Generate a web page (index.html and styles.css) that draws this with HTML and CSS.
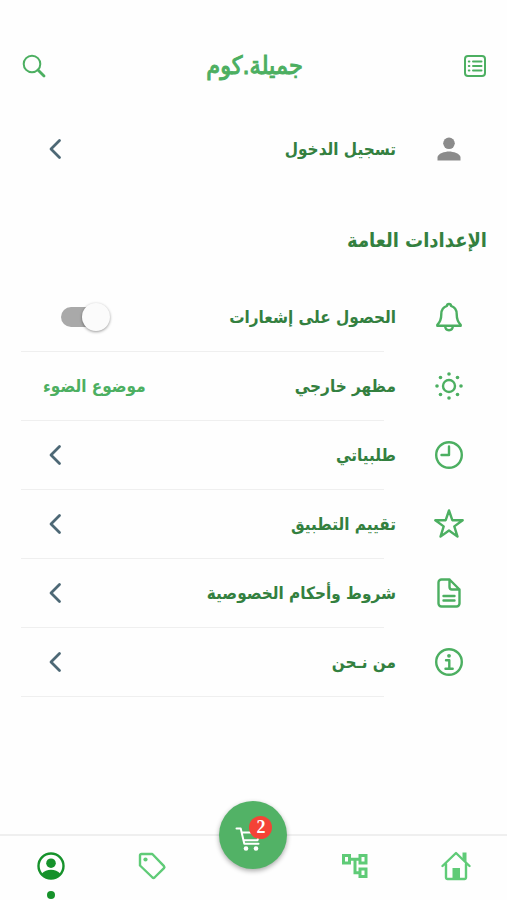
FILE: index.html
```html
<!DOCTYPE html>
<html lang="ar" dir="rtl">
<head>
<meta charset="utf-8">
<meta name="viewport" content="width=device-width, initial-scale=1">
<title>جميلة.كوم</title>
<link rel="stylesheet" href="styles.css">
</head>
<body>
<header class="topbar">
  <button class="icon-button" type="button" aria-label="القائمة">
    <svg class="icon-md" viewBox="0 0 24 24"><rect x="2" y="2" width="20" height="20" rx="3"/><path d="M10 7.500h8.500M10 12h8.500M10 16.500h8.500"/><path d="M5.800 7.500h.6M5.800 12h.6M5.800 16.500h.6"/></svg>
  </button>
  <h1 class="brand">جميلة.كوم</h1>
  <button class="icon-button" type="button" aria-label="بحث">
    <svg class="icon-md" viewBox="0 0 24 24"><circle cx="10" cy="10" r="8.300"/><path d="M16 16l6 6" stroke-width="2.800"/></svg>
  </button>
</header>

<main class="content">
  <a class="row login" href="#login">
    <span class="row-icon"><svg class="person" viewBox="0 0 24 24"><circle cx="12" cy="6.300" r="5.800"/><path d="M0.500 23.500v-3c0-4 7.500-6 11.500-6s11.500 2 11.500 6v3z"/></svg></span>
    <span class="row-label">تسجيل الدخول</span>
    <svg class="chevron" viewBox="0 0 14 22"><path d="M11.500 2.500L3 11l8.500 8.500"/></svg>
  </a>

  <h2 class="section-title">الإعدادات العامة</h2>

  <ul class="settings">
    <li>
      <label class="row" for="notify">
        <span class="row-icon"><svg class="icon-lg" viewBox="0 0 30 30"><path d="M15 2c-1.300 0-2 .8-2 1.800C9.300 5 7.300 8 7.300 12c0 5.500-1 8-4 10.800v1h23.400v-1c-3-2.800-4-5.300-4-10.800 0-4-2-7-5.700-8.200 0-1-.7-1.800-2-1.800zM11.200 24c0 2.500 1.600 4.200 3.800 4.200s3.800-1.700 3.800-4.200"/></svg></span>
        <span class="row-label">الحصول على إشعارات</span>
        <input class="switch" id="notify" type="checkbox" role="switch">
      </label>
    </li>
    <li>
      <a class="row" href="#theme">
        <span class="row-icon"><svg class="icon-lg" viewBox="0 0 30 30"><circle cx="15" cy="15" r="6"/><g class="solid"><circle cx="15" cy="3" r="1.800"/><circle cx="15" cy="27" r="1.800"/><circle cx="3" cy="15" r="1.800"/><circle cx="27" cy="15" r="1.800"/><circle cx="6.500" cy="6.500" r="1.800"/><circle cx="23.500" cy="6.500" r="1.800"/><circle cx="6.500" cy="23.500" r="1.800"/><circle cx="23.500" cy="23.500" r="1.800"/></g></svg></span>
        <span class="row-label">مظهر خارجي</span>
        <span class="row-value">موضوع الضوء</span>
      </a>
    </li>
    <li>
      <a class="row" href="#orders">
        <span class="row-icon"><svg class="icon-lg" viewBox="0 0 30 30"><circle cx="15" cy="15" r="12.800"/><path d="M15 6.500V15H7.500"/></svg></span>
        <span class="row-label">طلبياتي</span>
        <svg class="chevron" viewBox="0 0 14 22"><path d="M11.500 2.500L3 11l8.500 8.500"/></svg>
      </a>
    </li>
    <li>
      <a class="row" href="#rate">
        <span class="row-icon"><svg class="icon-lg" viewBox="0 0 30 30"><path d="M15 1.500l3.300 9.700h10.400l-8.400 6.200 3.200 10.200L15 21.500l-8.500 6.100 3.200-10.200-8.400-6.200h10.400z"/></svg></span>
        <span class="row-label">تقييم التطبيق</span>
        <svg class="chevron" viewBox="0 0 14 22"><path d="M11.500 2.500L3 11l8.500 8.500"/></svg>
      </a>
    </li>
    <li>
      <a class="row" href="#terms">
        <span class="row-icon"><svg class="icon-lg" viewBox="0 0 30 30"><path d="M7.500 1.500H15.500L25.500 11.500V25.500a3 3 0 0 1-3 3H7.500a3 3 0 0 1-3-3V4.500a3 3 0 0 1 3-3zM15.500 1.500V9a2.500 2.500 0 0 0 2.500 2.500h7.500M9.500 18h11M9.500 22.500h11"/></svg></span>
        <span class="row-label">شروط وأحكام الخصوصية</span>
        <svg class="chevron" viewBox="0 0 14 22"><path d="M11.500 2.500L3 11l8.500 8.500"/></svg>
      </a>
    </li>
    <li>
      <a class="row" href="#about">
        <span class="row-icon"><svg class="icon-lg" viewBox="0 0 30 30"><circle cx="15" cy="15" r="12.800"/><path d="M12 13.200h3.300v8.300M11.500 21.700h7.200"/><circle class="solid" cx="15" cy="8.800" r="1.900"/></svg></span>
        <span class="row-label">من نـحن</span>
        <svg class="chevron" viewBox="0 0 14 22"><path d="M11.500 2.500L3 11l8.500 8.500"/></svg>
      </a>
    </li>
  </ul>
</main>

<nav class="tabbar">
  <a class="tab" href="#home" aria-label="الرئيسية">
    <svg class="icon-lg" viewBox="0 0 30 30"><path d="M1.500 15L15 2l13.500 13M5 13v13.500a1.500 1.500 0 0 0 1.500 1.500h17a1.500 1.500 0 0 0 1.500-1.500V13"/><path class="solid" d="M11.500 17h7.500V28h-7.500zM21.500 1.500h4V11l-4-3.800z"/></svg>
  </a>
  <a class="tab" href="#categories" aria-label="الأقسام">
    <svg class="icon-lg square" viewBox="0 0 30 30"><path d="M3.500 4.500h6v7.500h-6zM20 4.500h6v7.500h-6zM20 18h6v7.500h-6zM10 8.300h10M15 8.300v13.400h5"/></svg>
  </a>
  <a class="tab" href="#cart" aria-label="السلة">
    <span class="cart">
      <svg class="icon-cart" viewBox="0 0 26 26"><path d="M1.500 2.500h4.200l3.600 15.200h14.200M7 6.500h17.500l-2 7.700H8.500"/><g class="solid"><circle cx="11" cy="22.500" r="2.300"/><circle cx="21" cy="22.500" r="2.300"/></g></svg>
      <span class="badge">2</span>
    </span>
  </a>
  <a class="tab" href="#offers" aria-label="العروض">
    <svg class="icon-lg" viewBox="0 0 30 30"><path d="M4.500 3h10.800L27 15.200a1.500 1.500 0 0 1 0 2L17.500 26.500a1.500 1.500 0 0 1-2 0L3 14.500V4.500A1.500 1.500 0 0 1 4.500 3z"/><circle class="solid" cx="8.500" cy="8.500" r="2.100"/></svg>
  </a>
  <a class="tab active" href="#account" aria-label="حسابي" aria-current="page">
    <svg class="icon-lg" viewBox="0 0 30 30"><circle cx="15" cy="15" r="12.500"/><g class="solid"><circle cx="15" cy="12.200" r="4.800"/><path d="M5.500 23c2.500-3 6-4.200 9.500-4.200s7 1.200 9.500 4.200a13 13 0 0 1-19 0z"/></g></svg>
  </a>
</nav>
</body>
</html>
```
FILE: styles.css
```css
* {
  box-sizing: border-box;
}

body {
  margin: 0;
  min-height: 100vh;
  display: flex;
  flex-direction: column;
  background: #fefefe;
  color: #33803f;
  font-family: "DejaVu Sans Condensed", "DejaVu Sans", sans-serif;
}

a {
  color: inherit;
  text-decoration: none;
}

svg {
  display: block;
  fill: none;
  stroke: currentColor;
  stroke-width: 2;
  stroke-linecap: round;
  stroke-linejoin: round;
}

.solid {
  fill: currentColor;
  stroke: none;
}

.topbar {
  display: flex;
  align-items: center;
  justify-content: space-between;
  padding: 40px 20px 0 22px;
  height: 92px;
  color: #4caf61;
}

.icon-button {
  padding: 0;
  border: 0;
  background: none;
  color: inherit;
}

.icon-md {
  width: 24px;
  height: 24px;
}

.icon-lg {
  width: 30px;
  height: 30px;
  stroke-width: 2.400;
}

.brand {
  margin: 0;
  font-size: 25px;
  line-height: 40px;
  font-weight: 400;
  -webkit-text-stroke: 1px;
}

.content {
  flex: 1;
}

.row {
  display: flex;
  align-items: center;
  height: 68px;
  padding: 0 43px;
}

.login {
  margin-top: 23px;
}

.row-icon {
  width: 30px;
  margin-left: 38px;
  color: #4caf61;
}

.person {
  width: 24px;
  height: 24px;
  margin: 0 auto;
  fill: #8b8b8b;
  stroke: none;
}

.row-label {
  flex: 1;
  font-size: 17px;
  line-height: 28px;
  font-weight: 700;
}

.row-value {
  font-size: 17px;
  line-height: 28px;
  font-weight: 700;
  color: #4caf61;
}

.chevron {
  width: 14px;
  height: 22px;
  margin-left: 5px;
  color: #4d6875;
  stroke-width: 2.800;
}

.section-title {
  margin: 37px 20px 23px;
  font-size: 20px;
  line-height: 40px;
  font-weight: 700;
}

.settings {
  list-style: none;
  margin: 0;
  padding: 0;
}

.settings li::after {
  content: "";
  display: block;
  height: 1px;
  margin: 0 123px 0 21px;
  background: #efefef;
}

.switch {
  appearance: none;
  display: flex;
  align-items: center;
  direction: ltr;
  width: 46px;
  height: 20px;
  margin: 0 0 0 18px;
  border-radius: 10px;
  background: #a9a9a9;
}

.switch::before {
  content: "";
  width: 28px;
  height: 28px;
  margin-left: 21px;
  flex: none;
  border-radius: 50%;
  background: #fbfbfb;
  box-shadow: 0 1px 3px #00000066;
}

.tabbar {
  display: flex;
  height: 66px;
  border-top: 2px solid #efefef;
  color: #5fcb77;
}

.tab {
  flex: 1;
  display: flex;
  flex-direction: column;
  align-items: center;
  padding-top: 15px;
}

.square {
  stroke-width: 3;
  stroke-linecap: butt;
  stroke-linejoin: miter;
}

.active {
  color: #16922b;
}

.active::after {
  content: "";
  width: 8px;
  height: 8px;
  margin-top: 10px;
  border-radius: 50%;
  background: currentColor;
}

.cart {
  position: relative;
  flex: none;
  display: grid;
  place-items: center;
  width: 68px;
  height: 68px;
  margin-top: -50px;
  border-radius: 50%;
  background: #52b266;
  color: #fff;
  box-shadow: 0 2px 5px #00000055;
}

.icon-cart {
  width: 26px;
  height: 26px;
  margin: 8px 0 0 0;
  margin-right: 10px;
}

.badge {
  position: absolute;
  top: 15px;
  left: 30px;
  width: 23px;
  height: 23px;
  border-radius: 50%;
  background: #f44336;
  font: 700 18px/23px "Liberation Serif", serif;
  text-align: center;
}
```
